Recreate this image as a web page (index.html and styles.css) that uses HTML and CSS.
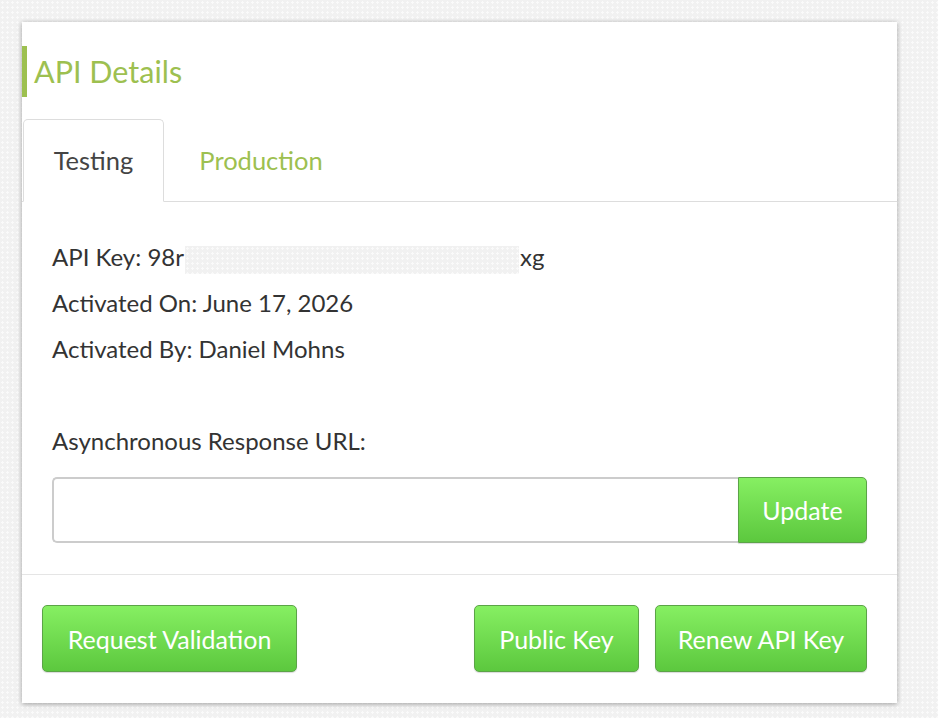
FILE: index.html
```html
<!DOCTYPE html>
<html lang="en">
<head>
  <meta charset="UTF-8">
  <title>API Details</title>
  <meta name="viewport" content="width=device-width, initial-scale=1.0">
  <link rel="stylesheet" href="styles.css">
</head>
<body>

  <div class="card">
    <h2 class="card-title">API Details</h2>

    <div class="tabs">
      <div class="tab active">Testing</div>
      <div class="tab">Production</div>
    </div>

    <div class="tab-body">
      <p class="info">API Key: 98r<span class="redacted"></span>xg</p>
      <p class="info">Activated On: June 17, 2026</p>
      <p class="info">Activated By: Daniel Mohns</p>

      <p class="info url-label">Asynchronous Response URL:</p>
      <div class="url-row">
        <input class="url-input" type="text">
        <button class="btn btn-update">Update</button>
      </div>
    </div>

    <div class="actions">
      <button class="btn">Request Validation</button>
      <div class="actions-right">
        <button class="btn">Public Key</button>
        <button class="btn">Renew API Key</button>
      </div>
    </div>
  </div>

</body>
</html>
```

FILE: styles.css
```css
* { box-sizing: border-box; }

body {
  margin: 0;
  padding: 22px 0 0 22px;
  background-color: #f1f1f1;
  background-image: radial-gradient(#fafafa 1px, transparent 1.2px);
  background-size: 5px 5px;
  font-family: 'Lato', 'Open Sans', sans-serif;
  color: #333;
  height: 718px;
  overflow: hidden;
}

.card {
  width: 875px;
  height: 681px;
  background: #fff;
  box-shadow: 0 1px 5px rgba(0, 0, 0, 0.35);
  padding-top: 24px;
}

.card-title {
  margin: 0;
  border-left: 5px solid #9dc050;
  padding-left: 7px;
  height: 51px;
  line-height: 50px;
  font-size: 30.5px;
  font-weight: normal;
  color: #9dc050;
}

.tabs {
  display: flex;
  margin-top: 22px;
  padding-left: 1px;
  border-bottom: 1px solid #ddd;
  height: 83px;
}

.tab {
  width: 141px;
  height: 83px;
  line-height: 80px;
  text-align: center;
  font-size: 25.5px;
  color: #9dc050;
  border: 1px solid transparent;
  border-radius: 5px 5px 0 0;
}

.tab.active {
  color: #444;
  border-color: #ddd;
  border-bottom-color: #fff;
  background: #fff;
}

.tab + .tab {
  width: 194px;
}

.tab-body {
  padding: 32px 30px 31px 30px;
  border-bottom: 1px solid #e5e5e5;
}

.info {
  margin: 0;
  height: 46px;
  line-height: 46px;
  font-size: 24px;
  color: #333;
}

.redacted {
  display: inline-block;
  width: 334px;
  height: 28px;
  vertical-align: middle;
  margin: 0 1px 0 1px;
  background-color: #f1f1f1;
  background-image: radial-gradient(#fafafa 1px, transparent 1.2px);
  background-size: 5px 5px;
}

.url-label {
  margin-top: 46px;
}

.url-row {
  display: flex;
  margin-top: 13px;
  height: 66px;
}

.url-input {
  flex: 1;
  height: 66px;
  border: 2px solid #ccc;
  border-right: none;
  border-radius: 5px 0 0 5px;
  font-size: 20px;
  padding: 0 12px;
  outline: none;
}

.btn {
  height: 67px;
  padding: 0 20px;
  background: linear-gradient(#86ef62, #5cc83e);
  border: 1px solid #5ba447;
  border-radius: 5px;
  color: #fff;
  font-family: inherit;
  font-size: 25px;
  cursor: pointer;
  box-shadow: 0 1px 1px rgba(0, 0, 0, 0.15);
}

.btn-update {
  width: 129px;
  height: 66px;
  border-radius: 0 5px 5px 0;
}

.actions {
  display: flex;
  justify-content: space-between;
  padding: 30px 30px 0 20px;
}

.actions .btn:first-child {
  width: 255px;
}

.actions-right {
  display: flex;
  gap: 16px;
}

.actions-right .btn:first-child {
  width: 165px;
}

.actions-right .btn:last-child {
  width: 212px;
}
```
